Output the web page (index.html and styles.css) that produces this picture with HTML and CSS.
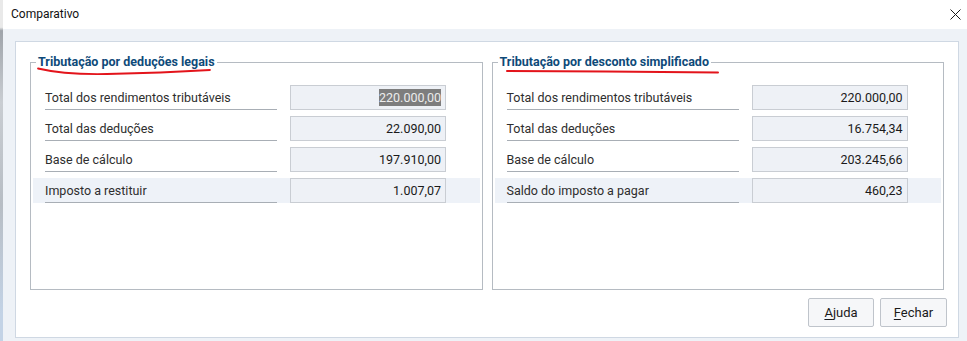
FILE: index.html
```html
<!DOCTYPE html>
<html lang="pt-BR">
<head>
    <meta charset="UTF-8">
    <title>Comparativo</title>
    <link rel="stylesheet" href="styles.css">
</head>
<body>
    <div class="desktop-strip"></div>

    <div class="window">
        <div class="titlebar">
            <span class="title">Comparativo</span>
            <svg class="close" width="11" height="11" viewBox="0 0 11 11">
                <path d="M0.5 0.5 L10.5 10.5 M10.5 0.5 L0.5 10.5" stroke="#1a1a1a" stroke-width="1" fill="none"/>
            </svg>
        </div>

        <div class="client">
            <div class="panel">
                <div class="groups">
                    <fieldset class="group">
                        <legend class="group-title">
                            Tributação por deduções legais
                            <svg class="mark mark-left" width="180" height="10" viewBox="0 0 180 10">
                                <path d="M1 1.5 C 20 6, 45 7.5, 70 7 S 140 5, 173 3" stroke="#e3141b" stroke-width="1.8" fill="none" stroke-linecap="round"/>
                            </svg>
                        </legend>
                        <div class="row">
                            <span class="label">Total dos rendimentos tributáveis</span>
                            <span class="value"><span class="selected">220.000,00</span></span>
                        </div>
                        <div class="row">
                            <span class="label">Total das deduções</span>
                            <span class="value">22.090,00</span>
                        </div>
                        <div class="row">
                            <span class="label">Base de cálculo</span>
                            <span class="value">197.910,00</span>
                        </div>
                        <div class="row row-result">
                            <span class="label">Imposto a restituir</span>
                            <span class="value">1.007,07</span>
                        </div>
                    </fieldset>

                    <fieldset class="group">
                        <legend class="group-title">
                            Tributação por desconto simplificado
                            <svg class="mark mark-right" width="216" height="8" viewBox="0 0 216 8">
                                <path d="M1 3 L 100 3.6 L 212 4.4" stroke="#e3141b" stroke-width="2" fill="none" stroke-linecap="round"/>
                            </svg>
                        </legend>
                        <div class="row">
                            <span class="label">Total dos rendimentos tributáveis</span>
                            <span class="value">220.000,00</span>
                        </div>
                        <div class="row">
                            <span class="label">Total das deduções</span>
                            <span class="value">16.754,34</span>
                        </div>
                        <div class="row">
                            <span class="label">Base de cálculo</span>
                            <span class="value">203.245,66</span>
                        </div>
                        <div class="row row-result">
                            <span class="label">Saldo do imposto a pagar</span>
                            <span class="value">460,23</span>
                        </div>
                    </fieldset>
                </div>

                <div class="buttons">
                    <button class="btn"><u>A</u>juda</button>
                    <button class="btn"><u>F</u>echar</button>
                </div>
            </div>
        </div>
    </div>
</body>
</html>
```

FILE: styles.css
```css
* {
    margin: 0;
    padding: 0;
    box-sizing: border-box;
}

body {
    font-family: Roboto, "Liberation Sans", sans-serif;
    font-size: 12.5px;
    color: #2b2b2b;
    background: #ffffff;
    width: 967px;
    height: 341px;
    overflow: hidden;
    display: flex;
}

.desktop-strip {
    width: 3px;
    flex-shrink: 0;
    background: linear-gradient(180deg, #e9e9e9 0%, #e9e9e9 8%, #9fa4aa 9%, #c9cdd2 30%, #b7bdc4 60%, #c3d3e6 92%, #c3d3e6 100%);
}

.window {
    flex: 1;
    display: flex;
    flex-direction: column;
}

.titlebar {
    height: 29px;
    display: flex;
    align-items: center;
    justify-content: space-between;
    padding: 0 6px 1px 8px;
    background: #ffffff;
}

.title {
    font-size: 12px;
    color: #111;
}

.client {
    flex: 1;
    background: #eef2f7;
    padding: 12px 8px 0 12px;
}

.panel {
    background: #ffffff;
    border: 1px solid #cfd8e3;
    height: 297px;
    padding: 12px 14px 0 14px;
}

.groups {
    display: flex;
    gap: 9px;
}

.group {
    flex: 1;
    height: 236px;
    border: 1px solid #b5bbc2;
    padding: 15px 2px 0 2px;
    display: flex;
    flex-direction: column;
    gap: 6px;
}

.group-title {
    position: relative;
    margin-left: 3px;
    padding: 0 2px;
    font-weight: 700;
    font-size: 12.5px;
    color: #0e4a79;
    line-height: 16px;
}

.mark {
    position: absolute;
    left: 1px;
    top: 13px;
}

.mark-right {
    left: 8px;
    top: 14px;
}

.row {
    display: flex;
    align-items: stretch;
    height: 25px;
    padding-left: 12px;
}

.row-result {
    background: #eef2f8;
}

.label {
    width: 232px;
    display: flex;
    align-items: center;
    border-bottom: 1px solid #a8aeb5;
    color: #2e2e2e;
    padding-top: 1px;
}

.value {
    width: 156px;
    margin-left: 13px;
    display: flex;
    align-items: center;
    justify-content: flex-end;
    padding-right: 4px;
    background: #eef1f6;
    border: 1px solid #c9cdd3;
    color: #1a1a1a;
}

.selected {
    background: #7d7d7d;
    color: #ececec;
    padding: 1px 0;
}

.buttons {
    display: flex;
    justify-content: flex-end;
    gap: 6px;
    margin-top: 8px;
    margin-right: -3px;
}

.btn {
    font-family: Roboto, "Liberation Sans", sans-serif;
    font-size: 13px;
    color: #1a1a1a;
    height: 29px;
    width: 66px;
    background: #f6f7f9;
    border: 1px solid #bfc4cb;
    border-radius: 2px;
}

.btn + .btn {
    width: 67px;
}

.btn u {
    text-underline-offset: 2px;
}
```
